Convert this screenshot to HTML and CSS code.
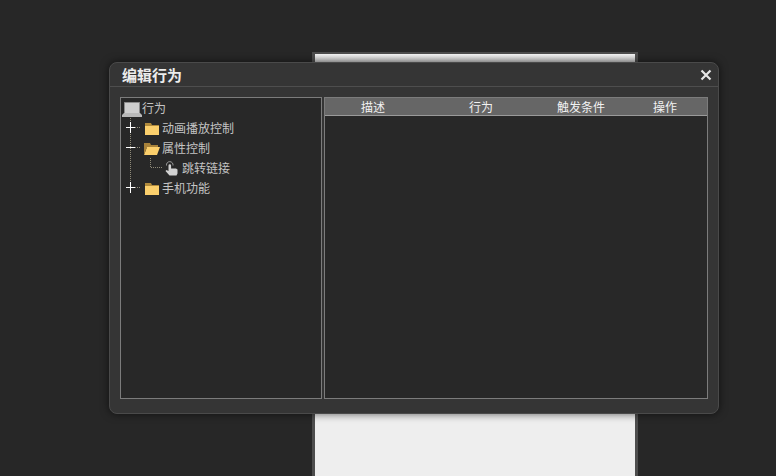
FILE: index.html

```html
<!DOCTYPE html>
<html lang="zh-CN">
<head>
    <meta charset="UTF-8">
    <meta name="viewport" content="width=device-width, initial-scale=1.0">
    <title>编辑行为</title>
    <link rel="stylesheet" href="styles.css">
</head>
<body>
    <div class="stage">
        <div class="canvas"></div>
    </div>

    <div class="dialog">
        <div class="dialog-title">
            <h1>编辑行为</h1>
            <svg class="close" width="12" height="12" viewBox="0 0 12 12">
                <path d="M1.500 1.500L10.500 10.500M10.500 1.500L1.500 10.500" stroke="#e6e6e6" stroke-width="2.200" fill="none"/>
            </svg>
        </div>
        <div class="dialog-body">
            <div class="tree">
                <div class="tree-row">
                    <svg class="root-icon" width="20" height="20" viewBox="0 0 20 20">
                        <path d="M3 4h14l1 1v10H2V5z" fill="#cfcfcf"/>
                        <path d="M3 4h14l1 1v10h-1V5H3v10H2V5z" fill="#8d8d8d"/>
                        <path d="M2 15h16l2 2v2H0v-2z" fill="#b9b9b9"/>
                    </svg>
                    <span>行为</span>
                </div>
                <div class="tree-row">
                    <svg class="branch" width="23" height="20" viewBox="0 0 23 20">
                        <path d="M9.500 0V20M14 9.500H20" stroke="#8f8a78" stroke-dasharray="1 1" fill="none"/>
                        <path d="M5 9.500H14M9.500 4V15" stroke="#fff" fill="none"/>
                    </svg>
                    <svg class="folder" width="16" height="20" viewBox="0 0 16 20">
                        <path d="M1 7h14v10H1z" fill="#fbcf6c"/>
                        <path d="M1 5h6l1 2h7v1H1z" fill="#b08a3c"/>
                    </svg>
                    <span>动画播放控制</span>
                </div>
                <div class="tree-row">
                    <svg class="branch" width="23" height="20" viewBox="0 0 23 20">
                        <path d="M9.500 0V20M14 9.500H20" stroke="#8f8a78" stroke-dasharray="1 1" fill="none"/>
                        <path d="M5 9.500H14" stroke="#fff" fill="none"/>
                    </svg>
                    <svg class="folder" width="16" height="20" viewBox="0 0 16 20">
                        <path d="M0 5h6l1 2h7v3H0z" fill="#a8823a"/>
                        <path d="M0 17L3 9h13l-3 8z" fill="#fbcf6c"/>
                        <path d="M0 9h3L0 17z" fill="#a8823a"/>
                    </svg>
                    <span>属性控制</span>
                </div>
                <div class="tree-row">
                    <svg class="branch-child" width="44" height="20" viewBox="0 0 44 20">
                        <path d="M9.500 0V20" stroke="#8f8a78" stroke-dasharray="1 1" fill="none"/>
                        <path d="M29.500 0V9.500H41" stroke="#8f8a78" stroke-dasharray="1 1" fill="none"/>
                    </svg>
                    <svg class="hand" width="14" height="20" viewBox="0 0 14 20">
                        <path d="M3.500 7.500a1.300 1.300 0 0 1 2.600 0V10.500H11l1.500 1v4l-1 2H4.500L0.500 13l1-1 2 1z" fill="#d2d2d2"/>
                        <path d="M1.500 7.500a3.300 3.300 0 1 1 6.500 0" stroke="#9a9a9a" fill="none"/>
                    </svg>
                    <span>跳转链接</span>
                </div>
                <div class="tree-row">
                    <svg class="branch" width="23" height="20" viewBox="0 0 23 20">
                        <path d="M9.500 0V10M14 9.500H20" stroke="#8f8a78" stroke-dasharray="1 1" fill="none"/>
                        <path d="M5 9.500H14M9.500 4V15" stroke="#fff" fill="none"/>
                    </svg>
                    <svg class="folder" width="16" height="20" viewBox="0 0 16 20">
                        <path d="M1 7h14v10H1z" fill="#fbcf6c"/>
                        <path d="M1 5h6l1 2h7v1H1z" fill="#b08a3c"/>
                    </svg>
                    <span>手机功能</span>
                </div>
            </div>
            <div class="list">
                <div class="list-head">
                    <span class="col-desc">描述</span>
                    <span class="col-action">行为</span>
                    <span class="col-trigger">触发条件</span>
                    <span class="col-op">操作</span>
                </div>
            </div>
        </div>
    </div>
</body>
</html>
```

FILE: styles.css

```css
html, body {
    height: 100%;
}
body {
    margin: 0;
    background: #272727;
    font-family: "Noto Sans CJK SC", "Liberation Sans", sans-serif;
    overflow: hidden;
}
.stage {
    width: 326px;
    height: 424px;
    margin: 52px 0 0 312px;
    box-sizing: border-box;
    border: 3px solid #4d4d4d;
    border-bottom: none;
    border-top-width: 2px;
}
.canvas {
    height: 100%;
    background: linear-gradient(#f4f4f4 0, #bdbdbd 10px, #eeeeee 10px);
}
.dialog {
    position: absolute;
    left: 109px;
    top: 62px;
    width: 610px;
    height: 352px;
    box-sizing: border-box;
    background: #353535;
    border: 1px solid #4a4a4a;
    border-radius: 8px;
    box-shadow: 0 0 8px rgba(0, 0, 0, 0.6);
    color: #cfcfcf;
}
.dialog-title {
    height: 23px;
    border-bottom: 1px solid #4e4e4e;
    display: flex;
    align-items: center;
    justify-content: space-between;
    padding: 0 6px 0 12px;
}
.dialog-title h1 {
    margin: 0;
    font-size: 15px;
    font-weight: bold;
    color: #ececec;
}
.dialog-body {
    display: flex;
    gap: 2px;
    padding: 10px 10px 0 10px;
}
.tree, .list {
    height: 302px;
    box-sizing: border-box;
    background: #282828;
    border: 1px solid #7c7c7c;
}
.tree {
    width: 202px;
    flex: none;
}
.list {
    flex: 1;
}
.tree-row {
    height: 20px;
    display: flex;
    align-items: center;
    font-size: 12px;
    color: #c4c4c4;
}
.tree-row span {
    padding-bottom: 2px;
}
.tree-row svg {
    flex: none;
}
.root-icon {
    margin-left: 1px;
}
.folder {
    margin-right: 2px;
}
.hand {
    margin-right: 3px;
}
.list-head {
    height: 17px;
    background: #666;
    border-bottom: 1px solid #9a9a9a;
    display: flex;
    align-items: center;
    font-size: 12px;
    color: #f2f2f2;
}
.list-head span {
    text-align: center;
}
.col-desc {
    width: 96px;
}
.col-action {
    width: 120px;
}
.col-trigger {
    width: 80px;
}
.col-op {
    width: 86px;
    box-sizing: border-box;
    padding-left: 2px;
}
```
